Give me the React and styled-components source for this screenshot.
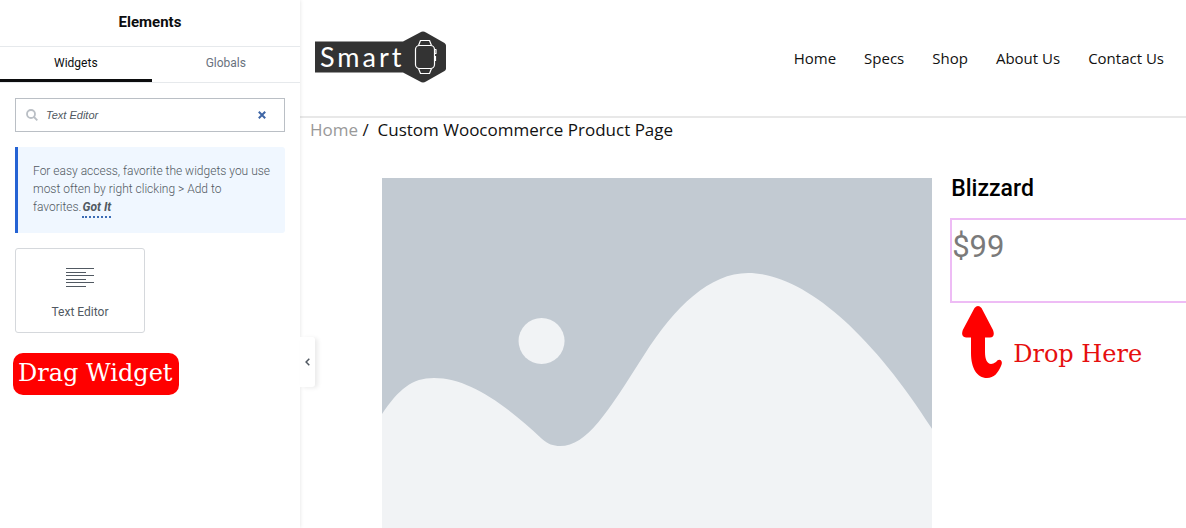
import React, { useState } from "react";
import styled, { createGlobalStyle } from "styled-components";

const GlobalStyle = createGlobalStyle`
  * { box-sizing: border-box; }
  body { margin: 0; background: #fff; font-family: Roboto, "Liberation Sans", sans-serif; }
  button, input { font: inherit; }
`;

const Editor = styled.div`
  display: flex;
  height: 100vh;
  overflow: hidden;
`;

const Panel = styled.aside`
  position: relative;
  z-index: 1;
  flex: 0 0 300px;
  background: #fff;
  box-shadow: 0 0 4px rgba(0, 0, 0, 0.12);
`;

const PanelTitle = styled.h1`
  margin: 0;
  padding: 12px 0 14px;
  border-bottom: 1px solid #e6e9ec;
  color: #0c0d0e;
  font-size: 15px;
  line-height: 20px;
  font-weight: 700;
  text-align: center;
`;

const Tabs = styled.div`
  display: flex;
  border-bottom: 1px solid #e6e9ec;
`;

const Tab = styled.button`
  flex: 1 0 auto;
  padding: 7px 0;
  border: 0;
  border-bottom: 3px solid ${(p) => (p.$active ? "#0c0d0e" : "transparent")};
  background: none;
  color: ${(p) => (p.$active ? "#0c0d0e" : "#69727d")};
  font-size: 12px;
  line-height: 18px;
`;

const PanelBody = styled.div`
  display: flex;
  flex-direction: column;
  align-items: flex-start;
  gap: 15px;
  padding: 15px;
`;

const SearchBox = styled.div`
  display: flex;
  align-items: center;
  align-self: stretch;
  gap: 8px;
  height: 34px;
  padding: 0 16px 0 10px;
  border: 1px solid #babfc5;
`;

const SearchInput = styled.input`
  flex: 1;
  min-width: 0;
  padding: 0;
  border: 0;
  outline: 0;
  background: none;
  color: #515962;
  font-family: "Liberation Sans", Arial, sans-serif;
  font-size: 11px;
  line-height: 18px;
  font-style: italic;
`;

const ClearButton = styled.button`
  display: flex;
  padding: 2px;
  border: 0;
  background: none;
`;

const Notice = styled.p`
  align-self: stretch;
  margin: 0;
  padding: 15px 12px 17px 15px;
  border-left: 3px solid #2563d4;
  border-radius: 0 3px 3px 0;
  background: #f0f7ff;
  color: #515962;
  font-size: 12px;
  line-height: 18px;
  font-weight: 300;
`;

const NoticeLink = styled.a`
  padding: 0 0 2px 1px;
  border-bottom: 2px dotted #3b6cb5;
  color: #515962;
  font-weight: 700;
  font-style: italic;
  text-decoration: none;
`;

const WidgetCard = styled.button`
  display: flex;
  flex-direction: column;
  align-items: center;
  gap: 16px;
  width: 130px;
  height: 85px;
  padding: 19px 0 0;
  border: 1px solid #d5d8dc;
  border-radius: 3px;
  background: #fff;
  color: #515962;
  font-size: 12px;
  line-height: 16px;
`;

const Callout = styled.div`
  font-family: "DejaVu Serif", serif;
  font-size: 24px;
  line-height: 32px;
  white-space: nowrap;
`;

const DragCallout = styled(Callout)`
  margin: 5px 0 0 -2px;
  padding: 4px 6px 6px 5px;
  border-radius: 10px;
  background: #f00;
  color: #fff;
`;

const CollapseButton = styled.button`
  position: absolute;
  top: 337px;
  left: 100%;
  display: flex;
  align-items: center;
  justify-content: center;
  width: 15px;
  height: 50px;
  padding: 0;
  border: 0;
  border-radius: 0 3px 3px 0;
  background: #fff;
  box-shadow: 3px 1px 4px rgba(0, 0, 0, 0.08);
`;

const Preview = styled.main`
  flex: 1;
  min-width: 0;
  overflow: hidden;
  color: #111;
`;

const SiteHeader = styled.header`
  display: flex;
  align-items: center;
  justify-content: space-between;
  height: 118px;
  padding: 0 22px 0 15px;
  border-bottom: 2px solid #e8e8e8;
`;

const LogoLink = styled.a`
  display: flex;
  padding-bottom: 2px;
`;

const Nav = styled.nav`
  display: flex;
  gap: 28px;
`;

const NavLink = styled.a`
  color: #111;
  font-family: "Open Sans", sans-serif;
  font-size: 15px;
  line-height: 20px;
  text-decoration: none;
`;

const Breadcrumb = styled.nav`
  display: flex;
  padding: 0 10px;
  font-family: "Open Sans", sans-serif;
  font-size: 17px;
  line-height: 24px;
  white-space: pre;
`;

const CrumbLink = styled.a`
  color: #999;
  text-decoration: none;
`;

const Product = styled.section`
  display: grid;
  grid-template-columns: 7fr 3fr;
  gap: 18px;
  padding: 36px 0 0 82px;
`;

const ProductImage = styled.svg`
  display: block;
  width: 100%;
`;

const ProductTitle = styled.h2`
  margin: 0;
  padding: 0 1px;
  color: #000;
  font-size: 23px;
  line-height: 22px;
  font-weight: 500;
`;

const PriceBox = styled.div`
  height: 85px;
  margin: 18px -2px 0 0;
  padding: 9px 0 0;
  border: 2px solid #eebcf5;
  color: #7a7a7a;
  font-size: 31px;
  line-height: 36px;
`;

const DropHint = styled.div`
  display: flex;
  align-items: center;
  gap: 11px;
  padding: 3px 0 0 12px;
`;

const DropCallout = styled(Callout)`
  padding-top: 22px;
  color: #e60f0f;
`;

const links = ["Home", "Specs", "Shop", "About Us", "Contact Us"];

function Logo() {
  return (
    <svg width="132" height="52" viewBox="0 0 132 52" role="img" aria-label="Smart">
      <path
        d="M0 10.5H88L105 1.4Q108 -.4 111 1.4L129.500 12Q131 13 131 14.500V37.500Q131 39 129.500 40L111 50.600Q108 52.400 105 50.600L88 41.500H0Z"
        fill="#333"
      />
      <text x="5" y="36" fill="#fff" fontFamily="Lato, sans-serif" fontSize="27" letterSpacing="3">
        Smart
      </text>
      <g fill="none" stroke="#fff" strokeWidth="1.200" strokeLinejoin="round">
        <rect x="100.500" y="14.500" width="19" height="23" rx="4" />
        <path d="M103.500 14.500L105.500 9.500H114.500L116.500 14.500M103.500 37.500L105.500 42.500H114.500L116.500 37.500M119.500 18.500h1.500v4h-1.500M120.500 25v5" />
      </g>
    </svg>
  );
}

function TextEditorIcon() {
  return (
    <svg width="28" height="20" viewBox="0 0 28 20" aria-hidden="true">
      <path
        d="M0 .5H28M0 4.500H20M0 7.500H28M0 11.500H20M0 14.500H28M0 18.500H20"
        stroke="#515962"
        strokeWidth="1.200"
      />
    </svg>
  );
}

export default function App() {
  const [tab, setTab] = useState("Widgets");
  const [query, setQuery] = useState("Text Editor");

  return (
    <Editor>
      <GlobalStyle />
      <Panel>
        <PanelTitle>Elements</PanelTitle>
        <Tabs role="tablist">
          {["Widgets", "Globals"].map((name) => (
            <Tab key={name} role="tab" aria-selected={tab === name} $active={tab === name} onClick={() => setTab(name)}>
              {name}
            </Tab>
          ))}
        </Tabs>
        <PanelBody>
          <SearchBox>
            <svg width="12" height="12" viewBox="0 0 12 12" fill="none" stroke="#babfc5" strokeWidth="1.800" aria-hidden="true">
              <circle cx="5" cy="5" r="4" />
              <path d="M8 8L11.300 11.300" />
            </svg>
            <SearchInput aria-label="Search widget" value={query} onChange={(e) => setQuery(e.target.value)} />
            <ClearButton aria-label="Clear search" onClick={() => setQuery("")}>
              <svg width="8" height="8" viewBox="0 0 8 8" stroke="#3f66a6" strokeWidth="2">
                <path d="M.8 .8L7.200 7.200M7.200 .8L.8 7.200" />
              </svg>
            </ClearButton>
          </SearchBox>
          <Notice>
            For easy access, favorite the widgets you use most often by right clicking &gt; Add to favorites.
            <NoticeLink href="#got-it">Got It</NoticeLink>
          </Notice>
          <WidgetCard>
            <TextEditorIcon />
            Text Editor
          </WidgetCard>
          <DragCallout>Drag Widget</DragCallout>
        </PanelBody>
        <CollapseButton aria-label="Hide panel">
          <svg width="5" height="8" viewBox="0 0 5 8" fill="none" stroke="#515962" strokeWidth="1.500">
            <path d="M4.300 .8L1.100 4L4.300 7.200" />
          </svg>
        </CollapseButton>
      </Panel>
      <Preview>
        <SiteHeader>
          <LogoLink href="#home">
            <Logo />
          </LogoLink>
          <Nav aria-label="Main">
            {links.map((label) => (
              <NavLink key={label} href="#page">
                {label}
              </NavLink>
            ))}
          </Nav>
        </SiteHeader>
        <Breadcrumb aria-label="Breadcrumb">
          <CrumbLink href="#home">Home</CrumbLink>
          <span> /  </span>
          <span>Custom Woocommerce Product Page</span>
        </Breadcrumb>
        <Product>
          <ProductImage viewBox="0 0 550 550" role="img" aria-label="Product placeholder">
            <rect width="550" height="550" fill="#c2cad2" />
            <circle cx="159.500" cy="163" r="23" fill="#f1f3f5" />
            <path
              d="M0 236C17 211 30 200 52 200C86 200 122 225 160 261C166 266 171 268 178 268C205 268 225 235 262 177C293 128 328 95 366 95C420 95 487 152 550 251V550H0Z"
              fill="#f1f3f5"
            />
          </ProductImage>
          <div>
            <ProductTitle>Blizzard</ProductTitle>
            <PriceBox>$99</PriceBox>
            <DropHint>
              <svg width="40" height="73" viewBox="0 0 40 73" aria-hidden="true">
                <path
                  d="M12.500 2Q16 -2 19.500 2L31 24Q33.500 31 28 31.500H23V46C23 56 27 61 34 56Q36 53 38.500 54Q41 56 39 60C36 67 32 72 25 72C15 72 9 62 9 47V31.500H4Q-1.500 31 .8 24Z"
                  fill="#f00"
                />
              </svg>
              <DropCallout>Drop Here</DropCallout>
            </DropHint>
          </div>
        </Product>
      </Preview>
    </Editor>
  );
}
